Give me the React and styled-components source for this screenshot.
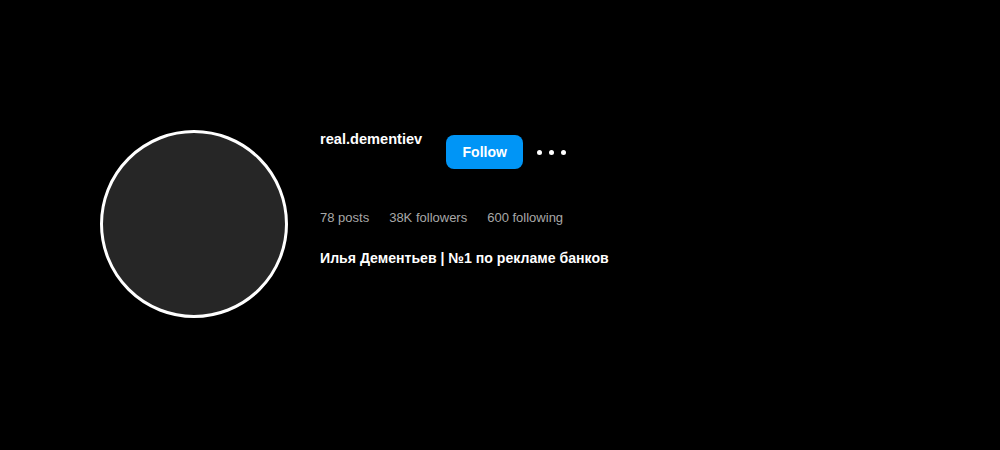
import styled, { createGlobalStyle } from 'styled-components';

const GlobalStyle = createGlobalStyle`
  body {
    margin: 0;
    background: #000;
    font-family: "Liberation Sans", Arial, sans-serif;
  }
`;

const Page = styled.div`
  width: 1000px;
  height: 450px;
  background: #000;
  box-sizing: border-box;
  padding: 130px 0 0 100px;
  display: flex;
  align-items: flex-start;
  gap: 32px;
`;

const Avatar = styled.div`
  width: 182px;
  height: 182px;
  border-radius: 50%;
  border: 3px solid #fff;
  background: #262626;
  flex-shrink: 0;
`;

const Info = styled.div`
  display: flex;
  flex-direction: column;
  color: #fff;
`;

const TopRow = styled.div`
  display: flex;
  align-items: flex-start;
  height: 40px;
`;

const Username = styled.h2`
  margin: 0;
  font-size: 14.6px;
  font-weight: 700;
  line-height: 18px;
`;

const FollowButton = styled.button`
  margin-left: 24px;
  margin-top: 5px;
  width: 77px;
  height: 34px;
  border: none;
  border-radius: 8px;
  background: #0095f6;
  color: #fff;
  font-family: inherit;
  font-size: 14px;
  font-weight: 700;
  cursor: pointer;
`;

const Dots = styled.div`
  display: flex;
  gap: 7px;
  margin-left: 14px;
  margin-top: 20px;
`;

const Dot = styled.span`
  width: 5px;
  height: 5px;
  border-radius: 50%;
  background: #fff;
`;

const Stats = styled.ul`
  list-style: none;
  margin: 39px 0 0;
  padding: 0;
  display: flex;
  gap: 20px;
  font-size: 13px;
  line-height: 18px;
  color: #a8a8a8;
`;

const Bio = styled.p`
  margin: 22px 0 0;
  font-size: 14.1px;
  font-weight: 700;
  line-height: 18px;
`;

export default function App() {
  return (
    <>
      <GlobalStyle />
      <Page>
        <Avatar />
        <Info>
          <TopRow>
            <Username>real.dementiev</Username>
            <FollowButton>Follow</FollowButton>
            <Dots>
              <Dot />
              <Dot />
              <Dot />
            </Dots>
          </TopRow>
          <Stats>
            <li>78 posts</li>
            <li>38K followers</li>
            <li>600 following</li>
          </Stats>
          <Bio>Илья Дементьев | №1 по рекламе банков</Bio>
        </Info>
      </Page>
    </>
  );
}
